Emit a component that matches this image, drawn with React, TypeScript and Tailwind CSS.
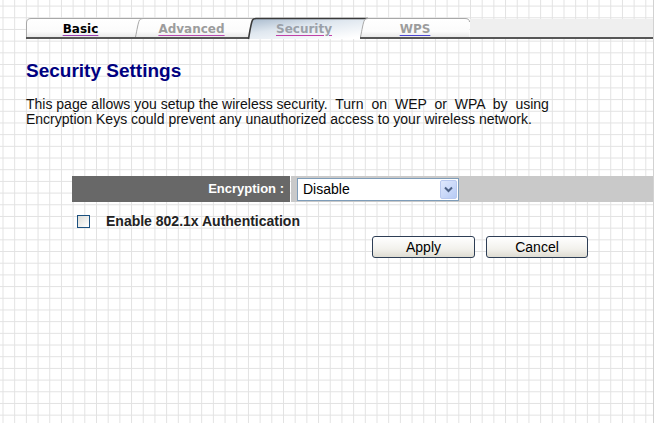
import React from "react";

type TabProps = {
  width: number;
  label: string;
  first?: boolean;
  active?: boolean;
  last?: boolean;
  boxClass: string;
  textClass: string;
};

function TabShape({ width, first, active, last }: { width: number; first?: boolean; active?: boolean; last?: boolean }) {
  const W = last ? width : width + 8;
  const h = active ? 21 : 19;
  const fillD = first
    ? `M0.5,${h} L0.5,5 Q0.5,0.5 5,0.5 L${W},0.5 L${W},${h} Z`
    : last
    ? `M0,${h} C1.5,12 3,5 4.5,2 Q5.5,0.5 8,0.5 L${W - 5},0.5 Q${W - 0.5},0.5 ${W - 0.5},4 L${W - 0.5},${h} Z`
    : `M0,${h} C1.5,12 3,5 4.5,2 Q5.5,0.5 8,0.5 L${W},0.5 L${W},${h} Z`;
  const strokeD = first
    ? `M0.5,${h} L0.5,5 Q0.5,0.5 5,0.5 L${W},0.5`
    : last
    ? `M0.5,${h} C2,12 3,5 4.5,2 Q5.5,0.5 8,0.5 L${W - 5},0.5 Q${W - 0.5},0.5 ${W - 0.5},4`
    : `M0.5,${h} C2,12 3,5 4.5,2 Q5.5,0.5 8,0.5 L${W},0.5`;
  const gid = `g-${width}-${active ? "a" : "n"}-${first ? "f" : "x"}`;
  return (
    <svg className="absolute left-0 top-0 overflow-visible" width={W} height={h} viewBox={`0 0 ${W} ${h}`}>
      <defs>
        {active ? (
          <linearGradient id={gid} x1="0" y1="0" x2="0.8" y2="1">
            <stop offset="0" stopColor="#a7b9cc" />
            <stop offset="0.45" stopColor="#dfe7ef" />
            <stop offset="1" stopColor="#ffffff" />
          </linearGradient>
        ) : (
          <linearGradient id={gid} x1="0" y1="0" x2="0" y2="1">
            <stop offset="0" stopColor="#ffffff" />
            <stop offset="0.7" stopColor="#fbfbfb" />
            <stop offset="1" stopColor="#e9e9e9" />
          </linearGradient>
        )}
      </defs>
      <path d={fillD} fill={`url(#${gid})`} />
      <path
        d={strokeD}
        fill="none"
        stroke={active ? "#3a3a3a" : "#a8a8a8"}
        strokeWidth={active ? 1.6 : 1}
      />
    </svg>
  );
}

function Tab({ width, label, first, active, last, boxClass, textClass }: TabProps) {
  return (
    <div className={boxClass}>
      <TabShape width={width} first={first} active={active} last={last} />
      <span className={textClass}>{label}</span>
    </div>
  );
}

function Chevron() {
  return (
    <svg width="9" height="7" viewBox="0 0 9 7">
      <path d="M1,1.5 L4.5,5 L8,1.5" fill="none" stroke="#4d6185" strokeWidth="2" />
    </svg>
  );
}

export default function App() {
  return (
    <div className="w-[664px] h-[437px] bg-white font-['Liberation_Sans',Arial,sans-serif]">
      <div className="w-[654px] h-[423px] border-r border-[#d2d2d2] bg-white [background-image:linear-gradient(to_right,#e2e2e2_1px,transparent_1px),linear-gradient(to_bottom,#e2e2e2_1px,transparent_1px)] [background-size:11.7px_11.7px] [background-position:2.5px_5.6px] pl-[26px] pt-[18px] flex flex-col">
        {/* Tabs */}
        <div className="flex h-[21px] font-['DejaVu_Sans',Verdana,sans-serif] text-[12px] font-bold">
          <Tab
            width={109}
            label="Basic"
            first
            boxClass="relative w-[109px] h-[21px] border-b-2 border-[#575757] flex justify-center"
            textClass="relative pt-[4px] leading-[14px] text-black underline decoration-[#9a3cb0] underline-offset-[2px]"
          />
          <Tab
            width={113}
            label="Advanced"
            boxClass="relative w-[113px] h-[21px] border-b-2 border-[#575757] flex justify-center"
            textClass="relative pt-[4px] leading-[14px] text-[#9c9c9c] underline decoration-[#b848b0] underline-offset-[2px]"
          />
          <Tab
            width={112}
            label="Security"
            active
            boxClass="relative w-[112px] h-[21px] flex justify-center"
            textClass="relative pt-[4px] leading-[14px] text-[#9aa0a8] underline decoration-[#c040a8] underline-offset-[2px]"
          />
          <Tab
            width={110}
            label="WPS"
            last
            boxClass="relative w-[110px] h-[21px] border-b-2 border-[#575757] flex justify-center"
            textClass="relative pt-[4px] leading-[14px] text-[#9c9c9c] underline decoration-[#4a44d0] underline-offset-[2px]"
          />
          <div className="flex-1 h-[21px] flex flex-col">
            <div className="h-[1px]" />
            <div className="flex-1 bg-[#efefef] border-b-2 border-[#575757]" />
          </div>
        </div>

        {/* Title */}
        <h1 className="mt-[21px] text-[19px] leading-[22px] font-bold text-[#000080]">Security Settings</h1>

        {/* Description */}
        <p className="mt-[15px] text-[14px] leading-[15px] text-[#111] whitespace-nowrap">
          This page allows you setup the wireless security.
          <span className="[word-spacing:4px]"> Turn on WEP or WPA by using</span>
          <br />
          Encryption Keys could prevent any unauthorized access to your wireless network.
        </p>

        {/* Encryption row */}
        <div className="mt-[49px] ml-[46px] flex h-[26px]">
          <div className="w-[218px] bg-[#686868] flex items-center justify-end pr-[6px] text-white text-[13px] font-bold">
            Encryption :
          </div>
          <div className="flex-1 ml-[1px] bg-[#c9c9c9] flex items-center pl-[6px]">
            <div className="w-[162px] h-[23px] bg-white border border-[#7f9db9] flex items-center justify-between pl-[5px] pr-[1px]">
              <span className="text-[14px] text-black">Disable</span>
              <div className="w-[17px] h-[19px] rounded-[2px] border border-[#b9c9ef] bg-[linear-gradient(135deg,#dfe8fd,#b7cbf5)] flex items-center justify-center">
                <Chevron />
              </div>
            </div>
          </div>
        </div>

        {/* Checkbox row */}
        <div className="mt-[12px] ml-[51px] flex items-center h-[14px]">
          <div className="w-[13px] h-[13px] border border-[#1c5180] bg-[linear-gradient(135deg,#dcdcd7,#ffffff)]" />
          <span className="ml-[16px] text-[14px] font-bold text-[#222]">Enable 802.1x Authentication</span>
        </div>

        {/* Buttons */}
        <div className="mt-[8px] ml-[346px] flex gap-[11px]">
          <button className="w-[103px] h-[22px] rounded-[3px] border border-[#2e3e55] bg-[linear-gradient(to_bottom,#ffffff,#f2f1ec_60%,#dedcd2)] text-[14px] text-black leading-[18px]">
            Apply
          </button>
          <button className="w-[102px] h-[22px] rounded-[3px] border border-[#2e3e55] bg-[linear-gradient(to_bottom,#ffffff,#f2f1ec_60%,#dedcd2)] text-[14px] text-black leading-[18px]">
            Cancel
          </button>
        </div>
      </div>
    </div>
  );
}
